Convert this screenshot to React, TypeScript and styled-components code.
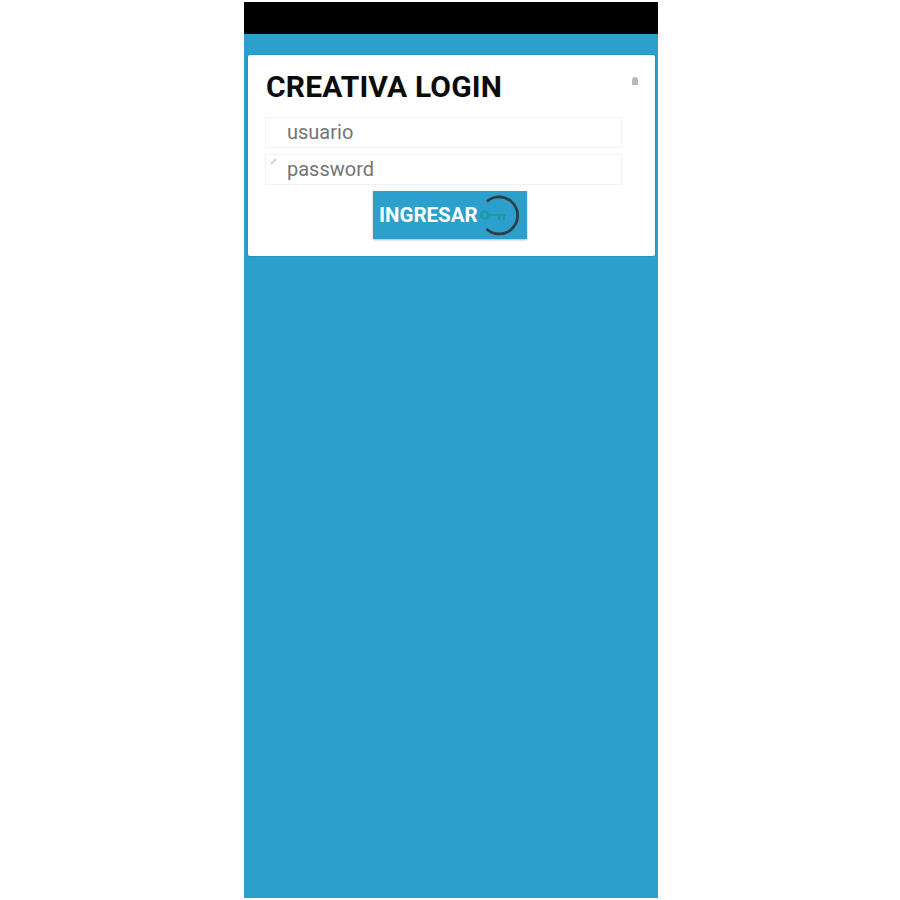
import React from "react";
import styled, { createGlobalStyle } from "styled-components";

const GlobalStyle = createGlobalStyle`
  html, body {
    margin: 0;
    padding: 0;
    background: #ffffff;
    font-family: Roboto, "Liberation Sans", sans-serif;
  }
`;

export default function App() {
  return (
    <Page>
      <GlobalStyle />
      <Phone>
        <StatusBar />
        <Content>
          <LoginCard>
            <TitleRow>
              <Title>CREATIVA LOGIN</Title>
              <CloseMark />
            </TitleRow>
            <Fields>
              <Field>
                <FieldText>usuario</FieldText>
              </Field>
              <Field>
                <BrokenIcon viewBox="0 0 8 8">
                  <path d="M1 7 L6 2" stroke="#d2d2d2" strokeWidth="2" />
                </BrokenIcon>
                <FieldText>password</FieldText>
              </Field>
            </Fields>
            <LoginButton>
              <ButtonLabel>INGRESAR</ButtonLabel>
              <KeyIcon viewBox="0 0 42 42">
                <path
                  d="M9 7.5 A18.5 18.5 0 1 1 8.5 35"
                  fill="none"
                  stroke="#333d44"
                  strokeWidth="2.8"
                />
                <circle cx="6.5" cy="21" r="3.6" fill="none" stroke="#1b9a9c" strokeWidth="2.2" />
                <path
                  d="M10 21 H28 M21 21 V26 M26 21 V26"
                  fill="none"
                  stroke="#1b9a9c"
                  strokeWidth="2.2"
                />
              </KeyIcon>
            </LoginButton>
          </LoginCard>
        </Content>
      </Phone>
    </Page>
  );
}

const Page = styled.div`
  width: 900px;
  height: 900px;
  padding: 2px 0 2px 244px;
  box-sizing: border-box;
`;

const Phone = styled.div`
  display: flex;
  flex-direction: column;
  width: 414px;
  height: 896px;
`;

const StatusBar = styled.div`
  height: 32px;
  background: #000000;
`;

const Content = styled.div`
  flex: 1;
  padding: 21px 3px 0 4px;
  background: #2ca0cd;
`;

const LoginCard = styled.div`
  display: flex;
  flex-direction: column;
  height: 201px;
  padding: 14px 33px 0 17px;
  box-sizing: border-box;
  background: #ffffff;
  border-radius: 2px;
  box-shadow: 0 0 2px rgba(10, 110, 160, 0.7);
`;

const TitleRow = styled.div`
  position: relative;
  height: 48px;
`;

const Title = styled.h1`
  margin: 0 0 0 1px;
  font-size: 30px;
  line-height: 36px;
  font-weight: 700;
  letter-spacing: 0.15px;
  color: #0c0c0c;
`;

const CloseMark = styled.span`
  position: absolute;
  top: 8px;
  right: -16px;
  width: 6px;
  height: 8px;
  border-radius: 3px 3px 0 0;
  background: #b9b9b9;
`;

const Fields = styled.div`
  display: flex;
  flex-direction: column;
  gap: 6px;
`;

const Field = styled.div`
  position: relative;
  display: flex;
  align-items: center;
  height: 31px;
  padding: 0 0 1px 21px;
  box-sizing: border-box;
  border: 1px solid #f2f2f2;
`;

const FieldText = styled.span`
  font-size: 20px;
  color: #757575;
`;

const BrokenIcon = styled.svg`
  position: absolute;
  top: 2px;
  left: 4px;
  width: 8px;
  height: 8px;
`;

const LoginButton = styled.button`
  display: flex;
  align-items: center;
  width: 154px;
  height: 48px;
  margin: 6px 0 0 108px;
  padding: 0 0 0 6px;
  box-sizing: border-box;
  border: none;
  background: #2ca0cd;
  box-shadow: 0 1px 2px rgba(0, 0, 0, 0.3);
  font-family: inherit;
`;

const ButtonLabel = styled.span`
  font-size: 20.5px;
  font-weight: 700;
  color: #ffffff;
`;

const KeyIcon = styled.svg`
  flex: none;
  width: 42px;
  height: 42px;
`;
